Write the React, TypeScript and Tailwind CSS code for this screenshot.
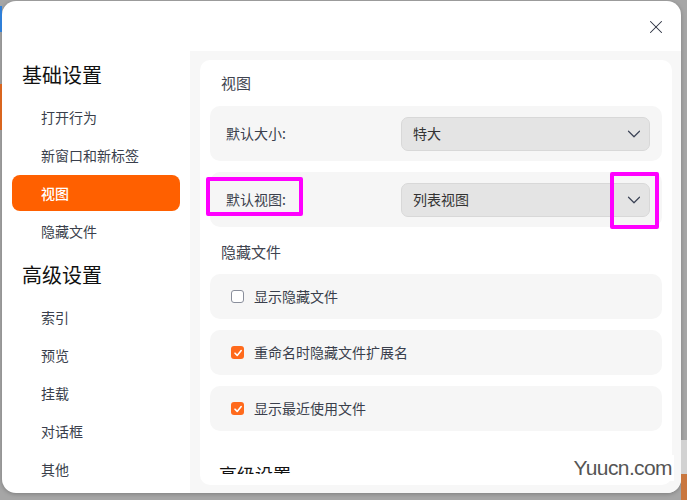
import { X, ChevronDown } from "lucide-react";

const basicItems = ["打开行为", "新窗口和新标签", "视图", "隐藏文件"];
const advancedItems = ["索引", "预览", "挂载", "对话框", "其他"];

const Checkbox = ({ checked }: { checked: boolean }) =>
  checked ? (
    <span className="w-[13px] h-[13px] rounded-[3px] bg-[#ff6a1c] flex items-center justify-center">
      <svg width="10" height="10" viewBox="0 0 10 10">
        <path d="M2 5.2 L4.2 7.4 L8.2 2.6" fill="none" stroke="#fff" strokeWidth="1.6" strokeLinecap="round" strokeLinejoin="round" />
      </svg>
    </span>
  ) : (
    <span className="w-[13px] h-[13px] rounded-[3px] border-[1.5px] border-[#8a8f9c] bg-white" />
  );

const Select = ({ value }: { value: string }) => (
  <div className="w-[249px] h-[34px] rounded-[7px] bg-[#e4e4e4] border border-[#d8d8d8] flex items-center justify-between pl-[11px] pr-[4px]">
    <span className="text-[14px] text-[#333]">{value}</span>
    <ChevronDown size={22} strokeWidth={1.3} className="text-[#3b4356]" />
  </div>
);

const SideItem = ({ label, active, first }: { label: string; active?: boolean; first?: boolean }) => (
  <div
    className={`${first ? "mt-[6px]" : "mt-[2px]"} h-[36px] rounded-[8px] flex items-center pl-[29px] text-[14px] ${
      active ? "bg-[#ff6000] text-white font-medium" : "text-[#3a3f4c]"
    }`}
  >
    {label}
  </div>
);

const App = () => {
  return (
    <div className="relative w-[687px] h-[500px] bg-[#a6a6a6] overflow-hidden [font-family:'Noto_Sans_CJK_SC','Noto_Sans',sans-serif]">
      <div className="absolute left-0 top-[6px] w-[2px] h-[26px] bg-[#2f7fd8]" />
      <div className="absolute left-0 top-[84px] w-[2px] h-[46px] bg-[#d9651f]" />
      <div className="absolute right-0 top-[440px] w-[6px] h-[34px] bg-[#d2d2d2]" />
      <div className="absolute right-0 top-[474px] w-[6px] h-[26px] bg-[#c9773f]" />

      <div className="ml-[2px] mt-[1px] w-[679px] h-[492px] bg-white rounded-[14px] overflow-hidden flex flex-col shadow-[0_1px_4px_rgba(0,0,0,0.25)]">
        <div className="h-[50px] flex items-center justify-end pr-[14px] pt-[2px] shrink-0">
          <X size={22} strokeWidth={1.1} className="text-[#2a3040]" />
        </div>

        <div className="flex flex-1 min-h-0">
          <div className="w-[188px] shrink-0 px-[10px] pt-[6px]">
            <div className="h-[36px] flex items-center pl-[10px] text-[20px] text-[#111]">基础设置</div>
            {basicItems.map((l, i) => (
              <SideItem key={l} label={l} active={l === "视图"} first={i === 0} />
            ))}
            <div className="mt-[8px] h-[36px] flex items-center pl-[10px] text-[20px] text-[#111]">高级设置</div>
            {advancedItems.map((l, i) => (
              <SideItem key={l} label={l} first={i === 0} />
            ))}
          </div>

          <div className="flex-1 bg-[#f7f7f7] pl-[10px] pr-[9px] pt-[9px] pb-[8px] flex">
            <div className="relative flex-1 bg-white rounded-[10px] flex flex-col pb-[11px]">
              <div className="flex-1 overflow-hidden px-[10px]">
                <div className="h-[46px] flex items-center pl-[11px] pt-[1px] text-[15px] text-[#3f4450]">视图</div>

                <div className="h-[55px] rounded-[10px] bg-[#f6f6f6] flex items-center justify-between pl-[16px] pr-[12px]">
                  <span className="text-[14px] text-[#3a3f4c]">默认大小:</span>
                  <Select value="特大" />
                </div>

                <div className="relative mt-[11px] h-[55px] rounded-[10px] bg-[#f6f6f6] flex items-center justify-between pl-[16px] pr-[12px]">
                  <span className="text-[14px] text-[#3a3f4c]">默认视图:</span>
                  <Select value="列表视图" />
                  <div className="absolute left-[-4px] top-[5px] w-[97px] h-[39px] border-[4px] border-[#ff00ff] rounded-[2px]" />
                  <div className="absolute left-[400px] top-[0px] w-[49px] h-[57px] border-[4px] border-[#ff00ff] rounded-[2px]" />
                </div>

                <div className="h-[47px] flex items-center pl-[11px] pt-[4px] text-[15px] text-[#3f4450]">隐藏文件</div>

                {[
                  { label: "显示隐藏文件", checked: false },
                  { label: "重命名时隐藏文件扩展名", checked: true },
                  { label: "显示最近使用文件", checked: true },
                ].map((r, i) => (
                  <div
                    key={r.label}
                    className={`${i > 0 ? "mt-[11px]" : ""} h-[45px] rounded-[10px] bg-[#f6f6f6] flex items-center gap-[10px] pl-[21px]`}
                  >
                    <Checkbox checked={r.checked} />
                    <span className="text-[14px] text-[#3a3f4c]">{r.label}</span>
                  </div>
                ))}

                <div className="mt-[30px] pl-[9px] text-[18px] leading-[27px] text-[#111]">高级设置</div>
              </div>

              <div className="absolute right-[-2px] bottom-[4px] bg-white pl-[4px] pr-[2px] text-[21px] leading-[26px] tracking-[-0.6px] text-[#555] [font-family:'Liberation_Sans',Arial,sans-serif]">
                Yuucn.com
              </div>
            </div>
          </div>
        </div>
      </div>
    </div>
  );
};

export default App;
